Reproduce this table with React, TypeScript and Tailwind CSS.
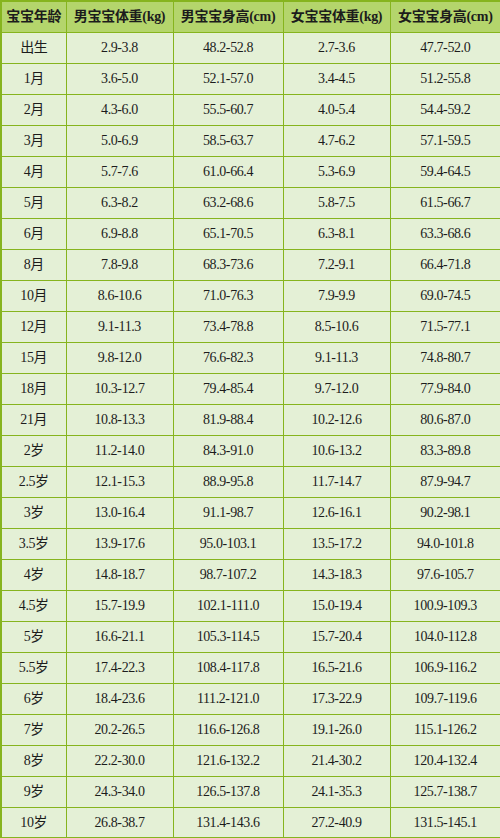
import React from 'react';

const rows: string[][] = [
  ['出生', '2.9-3.8', '48.2-52.8', '2.7-3.6', '47.7-52.0'],
  ['1月', '3.6-5.0', '52.1-57.0', '3.4-4.5', '51.2-55.8'],
  ['2月', '4.3-6.0', '55.5-60.7', '4.0-5.4', '54.4-59.2'],
  ['3月', '5.0-6.9', '58.5-63.7', '4.7-6.2', '57.1-59.5'],
  ['4月', '5.7-7.6', '61.0-66.4', '5.3-6.9', '59.4-64.5'],
  ['5月', '6.3-8.2', '63.2-68.6', '5.8-7.5', '61.5-66.7'],
  ['6月', '6.9-8.8', '65.1-70.5', '6.3-8.1', '63.3-68.6'],
  ['8月', '7.8-9.8', '68.3-73.6', '7.2-9.1', '66.4-71.8'],
  ['10月', '8.6-10.6', '71.0-76.3', '7.9-9.9', '69.0-74.5'],
  ['12月', '9.1-11.3', '73.4-78.8', '8.5-10.6', '71.5-77.1'],
  ['15月', '9.8-12.0', '76.6-82.3', '9.1-11.3', '74.8-80.7'],
  ['18月', '10.3-12.7', '79.4-85.4', '9.7-12.0', '77.9-84.0'],
  ['21月', '10.8-13.3', '81.9-88.4', '10.2-12.6', '80.6-87.0'],
  ['2岁', '11.2-14.0', '84.3-91.0', '10.6-13.2', '83.3-89.8'],
  ['2.5岁', '12.1-15.3', '88.9-95.8', '11.7-14.7', '87.9-94.7'],
  ['3岁', '13.0-16.4', '91.1-98.7', '12.6-16.1', '90.2-98.1'],
  ['3.5岁', '13.9-17.6', '95.0-103.1', '13.5-17.2', '94.0-101.8'],
  ['4岁', '14.8-18.7', '98.7-107.2', '14.3-18.3', '97.6-105.7'],
  ['4.5岁', '15.7-19.9', '102.1-111.0', '15.0-19.4', '100.9-109.3'],
  ['5岁', '16.6-21.1', '105.3-114.5', '15.7-20.4', '104.0-112.8'],
  ['5.5岁', '17.4-22.3', '108.4-117.8', '16.5-21.6', '106.9-116.2'],
  ['6岁', '18.4-23.6', '111.2-121.0', '17.3-22.9', '109.7-119.6'],
  ['7岁', '20.2-26.5', '116.6-126.8', '19.1-26.0', '115.1-126.2'],
  ['8岁', '22.2-30.0', '121.6-132.2', '21.4-30.2', '120.4-132.4'],
  ['9岁', '24.3-34.0', '126.5-137.8', '24.1-35.3', '125.7-138.7'],
  ['10岁', '26.8-38.7', '131.4-143.6', '27.2-40.9', '131.5-145.1'],
];

const headers = ['宝宝年龄', '男宝宝体重(kg)', '男宝宝身高(cm)', '女宝宝体重(kg)', '女宝宝身高(cm)'];

export default function App() {
  return (
    <div className="w-[500px] h-[838px] bg-[#e4f0d6] overflow-hidden">
      <table className="w-[500px] table-fixed border-collapse border-2 border-[#86b41e] text-[#1c1c1c] font-['Liberation_Serif','Noto_Sans_CJK_SC',serif]">
        <colgroup>
          <col className="w-[65px]" />
          <col className="w-[107px]" />
          <col className="w-[110px]" />
          <col className="w-[107px]" />
          <col className="w-[111px]" />
        </colgroup>
        <thead>
          <tr className="h-[31px] bg-[#b4d56c]">
            {headers.map((h) => (
              <th key={h} className="border border-[#86b41e] p-0 text-center text-[14px] font-bold tracking-[-0.3px]">
                {h}
              </th>
            ))}
          </tr>
        </thead>
        <tbody>
          {rows.map((r) => (
            <tr key={r[0]} className="h-[31px]">
              {r.map((c, i) => (
                <td key={i} className="border border-[#86b41e] p-0 text-center text-[14px] tracking-[-0.4px]">
                  {c}
                </td>
              ))}
            </tr>
          ))}
        </tbody>
      </table>
    </div>
  );
}
